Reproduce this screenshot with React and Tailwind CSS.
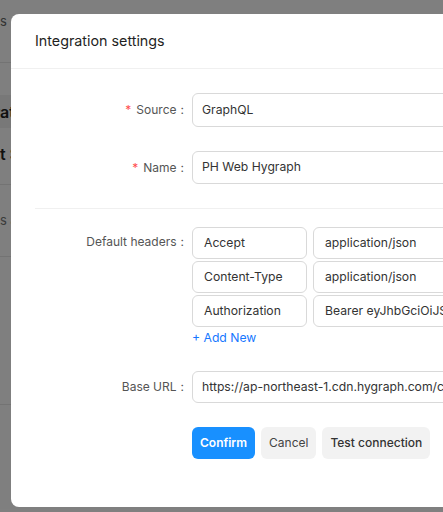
import React from 'react';

const Label = ({ required, children }) => (
  <div className="flex h-[33px] items-center justify-end pr-2 text-[12px] text-[#555]">
    {required && <span className="mr-[5px] text-[#ff4d4f]">*</span>}
    <span>{children}</span>
    <span className="ml-[4px]">:</span>
  </div>
);

const TextInput = ({ value, className = '' }) => (
  <div
    className={`flex items-center rounded-md border border-[#d9d9d9] px-[9px] text-[12.2px] text-[#333] whitespace-nowrap overflow-hidden ${className}`}
  >
    {value}
  </div>
);

// text of the page behind, whose start is hidden off the left edge
const Clipped = ({ hidden, shown }) => (
  <div className="flex whitespace-nowrap">
    <div className="flex w-0 justify-end">{hidden}</div>
    <span>{shown}</span>
  </div>
);

const headers = [
  ['Accept', 'application/json'],
  ['Content-Type', 'application/json'],
  ['Authorization', 'Bearer eyJhbGciOiJSUzI1NiIsInR5cCI6IkpXVCJ9'],
];

export default function App() {
  return (
    <div
      className="relative h-[512px] w-[443px] overflow-hidden bg-white"
      style={{ fontFamily: 'Inter, "Noto Sans", sans-serif' }}
    >
      {/* page behind the modal */}
      <div className="flex flex-col text-[#222]">
        <div className="flex h-[44px] items-center text-[13px] text-[#666]">
          <Clipped hidden="Integration" shown="s" />
        </div>
        <div className="h-[18px]" />
        <div className="h-px bg-[#e6e6e6]" />
        <div className="h-[32px]" />
        <div className="flex h-[33px] items-center bg-[#f0f0f0] text-[16px] font-semibold">
          <Clipped hidden="Integr" shown="ation" />
        </div>
        <div className="flex h-[52px] items-center text-[16px] font-semibold">
          <Clipped hidden="Tes" shown="t Source" />
        </div>
        <div className="h-[4px]" />
        <div className="h-px bg-[#e6e6e6]" />
        <div className="flex h-[71px] items-center text-[13px] text-[#777]">
          <Clipped hidden="Source" shown="s and destinations" />
        </div>
        <div className="h-px bg-[#e6e6e6]" />
        <div className="h-[147px]" />
        <div className="h-px bg-[#e6e6e6]" />
      </div>
      <div className="absolute inset-0 bg-black/50" />

      {/* modal */}
      <div className="absolute left-[11px] top-[14px] w-[560px] rounded-lg bg-white">
        <div className="flex h-[55px] items-center border-b border-[#f0f0f0] px-6 text-[14.3px] text-[#1f1f1f]">
          Integration settings
        </div>
        <div className="px-6 pb-12 pt-6">
          <div className="grid grid-cols-[157px_1fr] items-start gap-y-6">
            <Label required>Source</Label>
            <TextInput value="GraphQL" className="h-[34px]" />
            <Label required>Name</Label>
            <TextInput value="PH Web Hygraph" className="h-[33px]" />
          </div>

          <div className="mb-[18px] mt-6 h-px bg-[#f0f0f0]" />

          <div className="grid grid-cols-[157px_1fr] items-start">
            <div className="flex h-[29px] items-center justify-end pr-2 text-[12px] text-[#555]">
              <span>Default headers</span>
              <span className="ml-[4px]">:</span>
            </div>
            <div className="flex flex-col gap-[2px]">
              {headers.map(([k, v]) => (
                <div key={k} className="flex gap-[6px]">
                  <TextInput value={k} className="h-[32px] w-[115px] rounded-[3px] px-[11px]" />
                  <TextInput value={v} className="h-[32px] w-[200px] rounded-[3px] px-[11px]" />
                </div>
              ))}
              <div className="flex h-[19px] items-center text-[12.2px] text-[#1677ff]">+ Add New</div>
            </div>
          </div>

          <div className="mt-[23px] grid grid-cols-[157px_1fr] items-start">
            <div className="flex h-[32px] items-center justify-end pr-2 text-[12px] text-[#555]">
              <span>Base URL</span>
              <span className="ml-[4px]">:</span>
            </div>
            <TextInput
              value="https://ap-northeast-1.cdn.hygraph.com/content/clxyz/master"
              className="h-[32px]"
            />
          </div>

          <div className="mt-6 grid grid-cols-[157px_1fr]">
            <div />
            <div className="flex gap-[6px]">
              <button className="h-[32px] rounded-md bg-[#1890ff] px-[8px] text-[12px] font-semibold text-white">
                Confirm
              </button>
              <button className="h-[32px] rounded-md bg-[#f2f2f2] px-[8px] text-[12px] text-[#444]">
                Cancel
              </button>
              <button className="h-[32px] rounded-md bg-[#f2f2f2] px-[8px] text-[12px] font-medium text-[#333]">
                Test connection
              </button>
            </div>
          </div>
        </div>
      </div>
    </div>
  );
}
